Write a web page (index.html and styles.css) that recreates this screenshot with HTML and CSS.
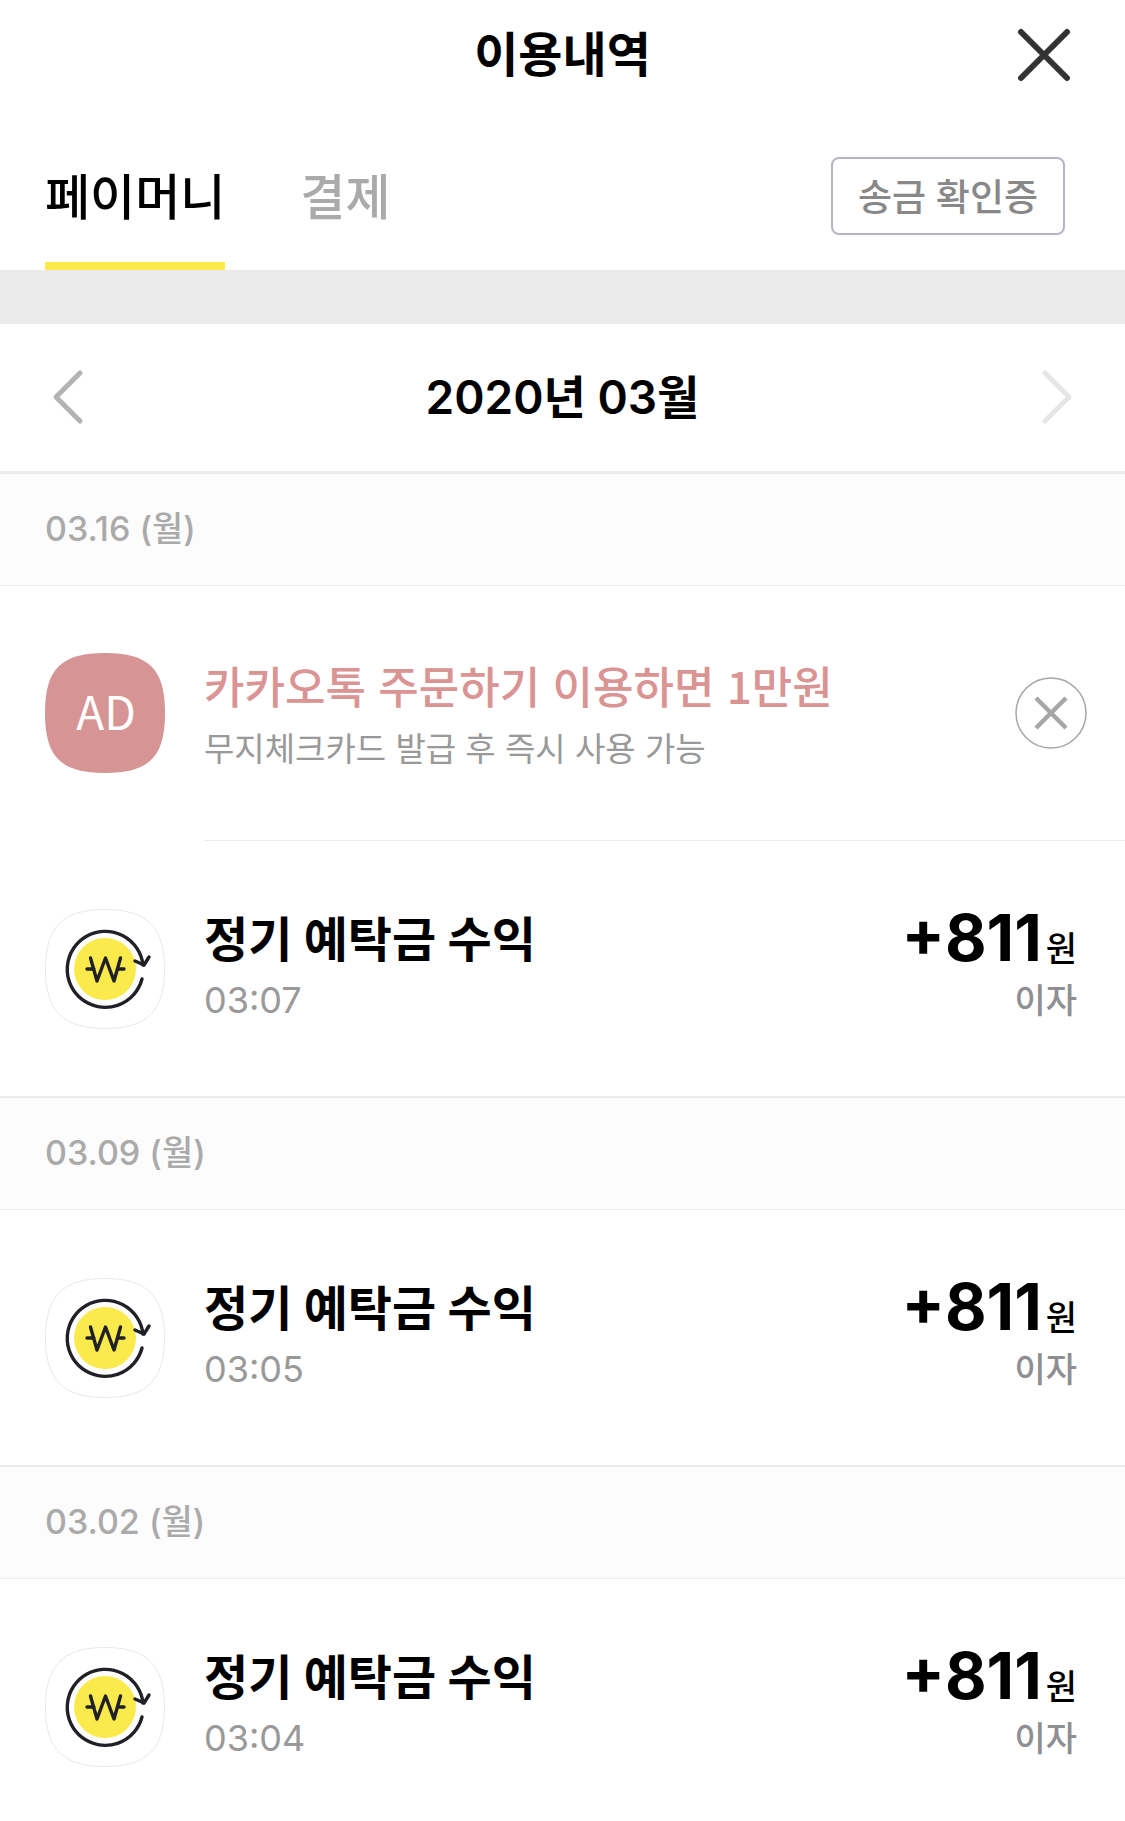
FILE: index.html
```html
<!DOCTYPE html>
<html lang="ko">
<head>
    <meta charset="UTF-8">
    <meta name="viewport" content="width=device-width, initial-scale=1">
    <title>이용내역</title>
    <link rel="stylesheet" href="styles.css">
</head>
<body>
    <!-- 공용 아이콘 -->
    <svg class="symbols" aria-hidden="true">
        <symbol id="deposit" viewBox="0 0 120 120">
            <path d="M60 .5C102 .5 119.500 18 119.500 60S102 119.500 60 119.500.5 102 .5 60 18 .5 60 .5Z" fill="#fff" stroke="#e8e8e8"/>
            <circle cx="60" cy="60" r="31" fill="#fbea4c"/>
            <g fill="none" stroke="#202126" stroke-width="3.400" stroke-linecap="round" stroke-linejoin="round">
                <path d="M97 70A38 38 0 1 1 98 56"/>
                <path d="M90 52l9 4 5-8"/>
                <path d="M45.500 49l6.500 23 8.500-23 8.500 23 6.500-23M42 60h7M73 60h6"/>
            </g>
        </symbol>
    </svg>

    <header class="header">
        <h1 class="header-title">이용내역</h1>
        <button class="icon-button header-close" type="button" aria-label="닫기">
            <svg width="54" height="54" viewBox="0 0 54 54" fill="none" stroke="#333" stroke-width="6" stroke-linecap="round">
                <path d="M4 4l46 46M50 4L4 50"/>
            </svg>
        </button>
    </header>

    <nav class="tabs">
        <a class="tab active" href="#money">페이머니</a>
        <a class="tab" href="#payment">결제</a>
        <button class="receipt-button" type="button">송금 확인증</button>
    </nav>

    <main id="money">
        <!-- 월 선택 -->
        <div class="month">
            <button class="icon-button" type="button" aria-label="이전 달">
                <svg width="32" height="56" viewBox="0 0 32 56" fill="none" stroke="#b3b3b3" stroke-width="5" stroke-linecap="round" stroke-linejoin="round">
                    <path d="M28 4L4 28l24 24"/>
                </svg>
            </button>
            <h2 class="month-title">2020년 03월</h2>
            <button class="icon-button" type="button" aria-label="다음 달">
                <svg width="32" height="56" viewBox="0 0 32 56" fill="none" stroke="#e6e6e6" stroke-width="5" stroke-linecap="round" stroke-linejoin="round">
                    <path d="M4 4l24 24L4 52"/>
                </svg>
            </button>
        </div>

        <section class="day">
            <h3 class="day-title">03.16 (월)</h3>
            <!-- 광고 -->
            <div class="row ad">
                <svg class="row-icon" viewBox="0 0 120 120" aria-hidden="true">
                    <path d="M60 0C104 0 120 16 120 60S104 120 60 120 0 104 0 60 16 0 60 0Z" fill="#d69594"/>
                    <text class="ad-label" x="61" y="77" text-anchor="middle">AD</text>
                </svg>
                <div class="row-body">
                    <div class="row-text">
                        <strong class="ad-title">카카오톡 주문하기 이용하면 1만원</strong>
                        <span class="ad-sub">무지체크카드 발급 후 즉시 사용 가능</span>
                    </div>
                    <button class="icon-button" type="button" aria-label="광고 닫기">
                        <svg width="72" height="72" viewBox="0 0 72 72" fill="none" stroke="#a6a6a6">
                            <circle cx="36" cy="36" r="35" stroke-width="1.500"/>
                            <path d="M21 21l30 30M51 21L21 51" stroke-width="4.500"/>
                        </svg>
                    </button>
                </div>
            </div>
            <div class="row">
                <svg class="row-icon" aria-hidden="true"><use href="#deposit"/></svg>
                <div class="row-body">
                    <div class="row-text">
                        <strong class="row-title">정기 예탁금 수익</strong>
                        <time class="row-time">03:07</time>
                    </div>
                    <div class="amount">
                        <strong class="amount-value">+811<span class="amount-unit">원</span></strong>
                        <span class="amount-type">이자</span>
                    </div>
                </div>
            </div>
        </section>

        <section class="day">
            <h3 class="day-title">03.09 (월)</h3>
            <div class="row">
                <svg class="row-icon" aria-hidden="true"><use href="#deposit"/></svg>
                <div class="row-body">
                    <div class="row-text">
                        <strong class="row-title">정기 예탁금 수익</strong>
                        <time class="row-time">03:05</time>
                    </div>
                    <div class="amount">
                        <strong class="amount-value">+811<span class="amount-unit">원</span></strong>
                        <span class="amount-type">이자</span>
                    </div>
                </div>
            </div>
        </section>

        <section class="day">
            <h3 class="day-title">03.02 (월)</h3>
            <div class="row">
                <svg class="row-icon" aria-hidden="true"><use href="#deposit"/></svg>
                <div class="row-body">
                    <div class="row-text">
                        <strong class="row-title">정기 예탁금 수익</strong>
                        <time class="row-time">03:04</time>
                    </div>
                    <div class="amount">
                        <strong class="amount-value">+811<span class="amount-unit">원</span></strong>
                        <span class="amount-type">이자</span>
                    </div>
                </div>
            </div>
        </section>
    </main>
</body>
</html>
```
FILE: styles.css
```css
:root {
    --yellow: #fbea4c;
    --line: #ebebeb;
    --text: #000;
    --muted: #999;
    --side: 45px;
}

* {
    box-sizing: border-box;
}

body {
    margin: 0;
    background: #fff;
    color: var(--text);
    font-family: Inter, "Noto Sans CJK KR", sans-serif;
}

h1, h2, h3 {
    margin: 0;
}

.symbols {
    position: absolute;
    width: 0;
    height: 0;
}

.icon-button {
    display: block;
    padding: 0;
    border: none;
    background: none;
    cursor: pointer;
}

.icon-button svg {
    display: block;
}

/* 상단 헤더 */
.header {
    display: grid;
    grid-template-columns: 1fr auto 1fr;
    align-items: center;
    height: 110px;
    padding: 0 54px;
}

.header-title {
    grid-column: 2;
    font-size: 48px;
    font-weight: 700;
    line-height: 56px;
}

.header-close {
    justify-self: end;
}

/* 탭 */
.tabs {
    display: flex;
    align-items: stretch;
    gap: 75px;
    height: 160px;
    padding: 0 60px 0 var(--side);
}

.tab {
    display: flex;
    align-items: center;
    padding-top: 24px;
    border-bottom: 8px solid transparent;
    color: #aaa;
    font-size: 49px;
    font-weight: 500;
    line-height: 56px;
    text-decoration: none;
}

.tab.active {
    border-color: var(--yellow);
    color: var(--text);
}

.receipt-button {
    align-self: flex-end;
    height: 78px;
    margin: 0 0 35px auto;
    padding: 0 25px 2px;
    border: 2px solid #b6b4c0;
    border-radius: 8px;
    background: #fff;
    color: #888;
    font-family: inherit;
    font-size: 37px;
    font-weight: 500;
    cursor: pointer;
}

/* 월 선택 */
.month {
    display: flex;
    align-items: center;
    justify-content: space-between;
    height: 204px;
    padding: 0 52px 2px;
    border-top: 54px solid #eaeaea;
    border-bottom: 3px solid var(--line);
}

.month-title {
    font-size: 46px;
    font-weight: 600;
    line-height: 56px;
}

/* 날짜별 내역 */
.day + .day {
    border-top: 2px solid var(--line);
}

.day-title {
    padding: 34px var(--side) 36px;
    border-bottom: 1px solid var(--line);
    background: #fcfcfc;
    color: #aaa;
    font-size: 34px;
    font-weight: 500;
    line-height: 41px;
}

.row {
    display: flex;
    gap: 39px;
    padding-left: var(--side);
}

.row-icon {
    flex: none;
    width: 120px;
    height: 120px;
    margin-top: 68px;
}

.row-body {
    flex: 1;
    display: flex;
    justify-content: space-between;
    height: 255px;
    padding: 69px 48px 0 0;
}

.row-text,
.amount {
    display: flex;
    flex-direction: column;
}

.row-title {
    font-size: 48px;
    font-weight: 700;
    line-height: 60px;
}

.row-time {
    color: var(--muted);
    font-size: 36px;
    line-height: 60px;
}

.amount {
    align-items: flex-end;
}

.amount-value {
    display: flex;
    align-items: baseline;
    gap: 4px;
    font-size: 64px;
    font-weight: 700;
    line-height: 56px;
}

.amount-unit {
    font-size: 34px;
    font-weight: 500;
}

.amount-type {
    color: #8e8e93;
    font-size: 34px;
    font-weight: 500;
    line-height: 48px;
}

/* 광고 */
.ad {
    font-family: "Noto Sans CJK KR", sans-serif;
}

.ad .row-icon {
    margin-top: 67px;
}

.ad .row-body {
    align-items: center;
    padding: 0 38px 0 0;
    border-bottom: 1px solid var(--line);
}

.ad .row-text {
    padding-top: 5px;
}

.ad-label {
    fill: #fff;
    font-size: 46px;
    font-weight: 400;
}

.ad-title {
    color: #d99493;
    font-size: 44px;
    font-weight: 500;
    line-height: 62px;
}

.ad-sub {
    color: var(--muted);
    font-size: 33px;
    font-weight: 400;
    line-height: 62px;
}
```
